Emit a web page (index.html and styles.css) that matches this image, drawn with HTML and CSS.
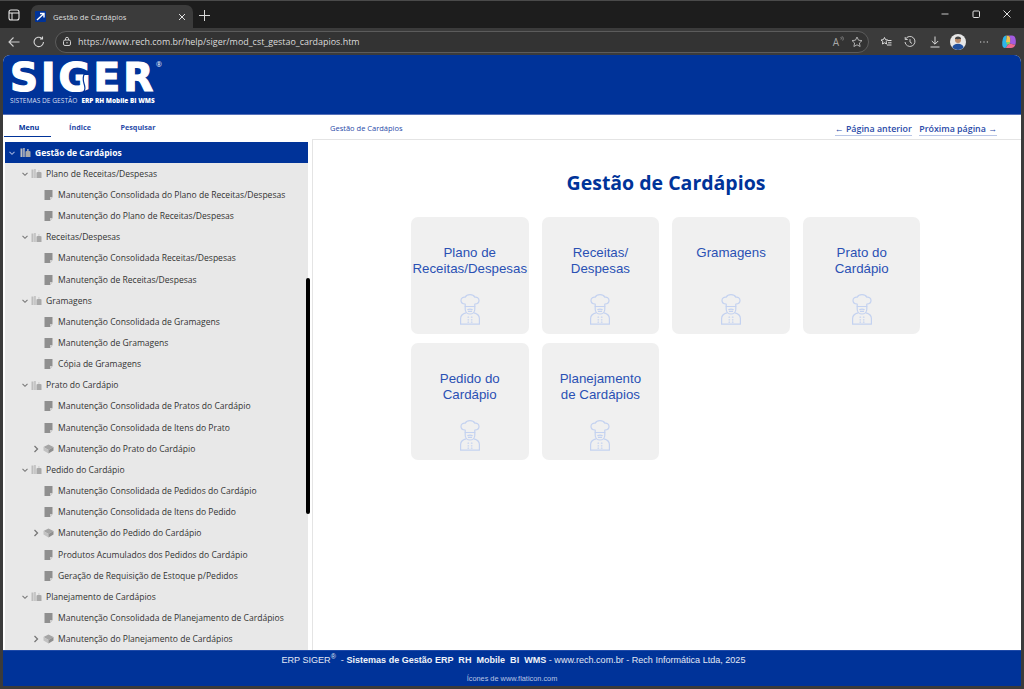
FILE: index.html
```html
<!DOCTYPE html>
<html lang="pt-BR">
<head>
<meta charset="utf-8">
<title>Gestão de Cardápios</title>
<link rel="stylesheet" href="styles.css">
</head>
<body>
<svg class="defs" width="0" height="0" aria-hidden="true">
  <symbol id="chevd" viewBox="0 0 8 8"><path d="M1.500 2.800 4 5.300 6.500 2.800" fill="none" stroke="currentColor" stroke-width="1.100"/></symbol>
  <symbol id="chevr" viewBox="0 0 8 8"><path d="M2.500 1 5.500 4 2.500 7" fill="none" stroke="currentColor" stroke-width="1.300"/></symbol>
  <symbol id="books" viewBox="0 0 11 11"><path d="M0.500 1.500h2v8.500h-2zM3.200 1h1.500v9H3.200z" fill="#bdbdbd"/><path d="M5.500 10V4.500c1.500-.6 3.500-.6 5 0V10z" fill="#a8a8a8"/><path d="M7.300 2h1.200v2H7.300z" fill="#cfcfcf"/></symbol>
  <symbol id="doc" viewBox="0 0 8 10"><path d="M0 0h8v7L5.500 10H0z" fill="#8f8f8f"/><path d="M5.500 10V7H8z" fill="#cfcfcf"/></symbol>
  <symbol id="book" viewBox="0 0 11 10"><path d="M5.500.5 10.500 3 5.500 6 .5 3z" fill="#a5a5a5"/><path d="M.5 3v3.500L5.500 9.500V6z" fill="#c2c2c2"/><path d="M10.500 3v3.500L5.500 9.500V6z" fill="#8f8f8f"/></symbol>
  <symbol id="chef" viewBox="0 0 20 31">
    <g fill="none" stroke="currentColor" stroke-width="1.200" stroke-linejoin="round" stroke-linecap="round">
      <path d="M5.200 10C2 9.800.9 8 1 6.200 1.100 4 3.200 2.800 5.200 3.200 6 1.600 7.900.7 10 .7s4 .9 4.800 2.500c2-.4 4.100.8 4.200 3 .1 1.800-1 3.600-4.200 3.800V12.500H5.200z"/>
      <path d="M5.200 12.500v2.700c0 2.700 2.100 4.800 4.800 4.800s4.800-2.100 4.800-4.800v-2.700"/>
      <path d="M7.800 15.600c1.400-.7 3-.7 4.400 0M8.500 17.400h3"/>
      <path d="M6 18.800C3 19.600.6 21.400.6 24.500v5.700h18.800v-5.700c0-3.100-2.400-4.900-5.400-5.700"/>
      <path d="M8 23.200h.6M11.400 23.200h.6M8 25.800h.6M11.400 25.800h.6M8 28.200h.6M11.400 28.200h.6"/>
    </g>
  </symbol>
</svg>

<div class="window">
  <div class="tabbar">
    <svg class="tabs-ico" viewBox="0 0 12 12" width="12" height="12"><rect x="1" y="1" width="10" height="10" rx="2" fill="none" stroke="#e8e8e8" stroke-width="1.100"/><path d="M1 4h10M4 4v7" stroke="#e8e8e8" fill="none"/></svg>
    <div class="tab">
      <svg class="favicon" viewBox="0 0 11 11" width="11" height="11"><rect width="11" height="11" rx="1" fill="#003399"/><path d="M2 9 8.500 3M5 2.500h4v4" stroke="#fff" stroke-width="1.400" fill="none"/></svg>
      <span class="tab-title">Gestão de Cardápios</span>
      <svg class="tab-x" viewBox="0 0 8 8" width="8" height="8"><path d="M1 1 7 7M7 1 1 7" stroke="#e0e0e0" stroke-width="1"/></svg>
    </div>
    <svg class="newtab" viewBox="0 0 11 11" width="11" height="11"><path d="M5.500 0v11M0 5.500h11" stroke="#d8d8d8" stroke-width="1"/></svg>
    <div class="winctl">
      <svg viewBox="0 0 10 10" width="10" height="10"><path d="M1.500 5h7" stroke="#c8c8c8" stroke-width="1"/></svg>
      <svg viewBox="0 0 10 10" width="10" height="10"><rect x="2" y="2" width="6.500" height="6.500" rx="1" fill="none" stroke="#e0e0e0" stroke-width="1"/></svg>
      <svg viewBox="0 0 10 10" width="10" height="10"><path d="M1.500 1.500 8.500 8.500M8.500 1.500 1.500 8.500" stroke="#e0e0e0" stroke-width="1"/></svg>
    </div>
  </div>

  <div class="toolbar">
    <svg class="nav-back" viewBox="0 0 12 12" width="12" height="12"><path d="M11.500 6H1M5.500 1.500 1 6l4.500 4.500" fill="none" stroke="#cfcfcf" stroke-width="1.100"/></svg>
    <svg class="nav-reload" viewBox="0 0 12 12" width="12" height="12"><path d="M10.500 6A4.700 4.700 0 1 1 8.800 2.300M9.500.5V3H7" fill="none" stroke="#d6d6d6" stroke-width="1.100"/></svg>
    <div class="urlbar">
      <svg viewBox="0 0 10 11" width="10" height="11"><rect x="1.500" y="4" width="7" height="5.500" rx="1.500" fill="none" stroke="#cfcfcf" stroke-width="1"/><path d="M3.500 4V2.800a1.500 1.500 0 0 1 3 0V4" fill="none" stroke="#cfcfcf"/><circle cx="5" cy="6.700" r=".7" fill="#cfcfcf"/></svg>
      <span class="url">https://www.rech.com.br/help/siger/mod_cst_gestao_cardapios.htm</span>
      <span class="read-aloud">A</span>
      <svg class="read-waves" viewBox="0 0 4 6" width="4" height="6"><path d="M.5 1c1 .7 1 1.800.5 2.500M2 .3c1.500 1 1.500 3 .7 4.200" fill="none" stroke="#a8a8a8" stroke-width=".7"/></svg>
      <svg viewBox="0 0 12 12" width="12" height="12"><path d="M6 1l1.500 3.200 3.500.4-2.600 2.400.7 3.500L6 8.800 2.900 10.500l.7-3.500L1 4.600l3.500-.4z" fill="none" stroke="#b0b0b0"/></svg>
    </div>
    <div class="tools">
      <svg viewBox="0 0 12 12" width="12" height="12"><path d="M4.500 1.500l1 2.200 2.300.3-1.700 1.600.5 2.400-2.100-1.200-2.100 1.200.5-2.400L1 4l2.300-.3zM8 4.500h3.500M8 6.800h3.500M7 9h4.500" fill="none" stroke="#dcdcdc"/></svg>
      <svg viewBox="0 0 12 12" width="12" height="12"><path d="M1.500 3.200A5 5 0 1 1 1 6M1.200 1v2.500h2.500M6 3.200V6l2 1.500" fill="none" stroke="#cfcfcf"/></svg>
      <svg viewBox="0 0 12 12" width="12" height="12"><path d="M6 .5v7.500M2.800 5 6 8.200 9.200 5M1.500 11h9" fill="none" stroke="#dcdcdc"/></svg>
      <svg class="avatar" viewBox="0 0 16 16" width="16" height="16"><circle cx="8" cy="8" r="8" fill="#e6e6e6"/><circle cx="8" cy="6" r="3" fill="#b98a6a"/><path d="M8 2.500c-2 0-3 1.200-3 2.500 2 .3 4 .1 6 0 0-1.300-1-2.500-3-2.500z" fill="#444"/><path d="M2.300 13.500C3 11 5 9.800 8 9.800s5 1.200 5.700 3.700A8 8 0 0 1 8 16a8 8 0 0 1-5.700-2.500z" fill="#1f4e9c"/></svg>
      <svg class="dots" viewBox="0 0 12 12" width="12" height="12"><path d="M2 6h1.200M5.400 6h1.200M8.800 6H10" stroke="#dcdcdc" stroke-width="1.200"/></svg>
      <svg class="copilot" viewBox="0 0 16 16" width="16" height="16">
        <path d="M5.500 1.500h5.500c1.800 0 3 1.200 3.500 3.200.5 2 .5 4.500-.2 6.300L9 9.500l.2-5C9.200 2.800 7.500 1.500 5.500 1.500z" fill="#a35be0"/>
        <path d="M5.500 1.500c2 0 3.700 1.300 3.700 3L9 9.500 5 8z" fill="#f2c14e"/>
        <path d="M5.500 1.500C3.500 1.500 2.300 3 1.800 5 1.300 7 1 9 1.300 11c.2 1.600 1 3 2.500 3 1.500 0 2.300-1.500 2.700-3L7 8 5 8z" fill="#2fb4e9"/>
        <path d="M3.800 14H10c2 0 3.500-1.300 4.300-3L9 9.500 6.500 11c-.4 1.500-1.200 3-2.700 3z" fill="#ee6a8f"/>
        <path d="M5 8h4L9 9.500 6.500 11z" fill="#7fd36b"/>
      </svg>
    </div>
  </div>

  <div class="page">
    <header class="brand">
      <div class="logo">
        <div class="logo-word">SIGER</div>
        <span class="logo-reg">®</span>
        <svg class="logo-swoosh" viewBox="0 0 30 26" width="30" height="26"><path d="M1 22c7 3 13 3 18 .5 3-2 2-6 1-9-1-3-1-6 0-9l5 0" fill="none" stroke="#003399" stroke-width="1.200"/></svg>
        <div class="logo-sub"><span>SISTEMAS DE GESTÃO</span><b>ERP RH Mobile BI WMS</b></div>
      </div>
    </header>

    <div class="main">
      <aside class="side">
        <nav class="side-tabs">
          <a class="side-tab is-active">Menu</a>
          <a class="side-tab">Índice</a>
          <a class="side-tab">Pesquisar</a>
        </nav>
        <div class="tree">
          <div class="row l0 is-selected"><svg class="chev"><use href="#chevd"/></svg><svg class="ico"><use href="#books"/></svg><span>Gestão de Cardápios</span></div>

          <div class="row l1"><svg class="chev"><use href="#chevd"/></svg><svg class="ico"><use href="#books"/></svg><span>Plano de Receitas/Despesas</span></div>
          <div class="row l2"><svg class="chev"></svg><svg class="ico"><use href="#doc"/></svg><span>Manutenção Consolidada do Plano de Receitas/Despesas</span></div>
          <div class="row l2"><svg class="chev"></svg><svg class="ico"><use href="#doc"/></svg><span>Manutenção do Plano de Receitas/Despesas</span></div>

          <div class="row l1"><svg class="chev"><use href="#chevd"/></svg><svg class="ico"><use href="#books"/></svg><span>Receitas/Despesas</span></div>
          <div class="row l2"><svg class="chev"></svg><svg class="ico"><use href="#doc"/></svg><span>Manutenção Consolidada Receitas/Despesas</span></div>
          <div class="row l2"><svg class="chev"></svg><svg class="ico"><use href="#doc"/></svg><span>Manutenção de Receitas/Despesas</span></div>

          <div class="row l1"><svg class="chev"><use href="#chevd"/></svg><svg class="ico"><use href="#books"/></svg><span>Gramagens</span></div>
          <div class="row l2"><svg class="chev"></svg><svg class="ico"><use href="#doc"/></svg><span>Manutenção Consolidada de Gramagens</span></div>
          <div class="row l2"><svg class="chev"></svg><svg class="ico"><use href="#doc"/></svg><span>Manutenção de Gramagens</span></div>
          <div class="row l2"><svg class="chev"></svg><svg class="ico"><use href="#doc"/></svg><span>Cópia de Gramagens</span></div>

          <div class="row l1"><svg class="chev"><use href="#chevd"/></svg><svg class="ico"><use href="#books"/></svg><span>Prato do Cardápio</span></div>
          <div class="row l2"><svg class="chev"></svg><svg class="ico"><use href="#doc"/></svg><span>Manutenção Consolidada de Pratos do Cardápio</span></div>
          <div class="row l2"><svg class="chev"></svg><svg class="ico"><use href="#doc"/></svg><span>Manutenção Consolidada de Itens do Prato</span></div>
          <div class="row l2 has-book"><svg class="chev"><use href="#chevr"/></svg><svg class="ico"><use href="#book"/></svg><span>Manutenção do Prato do Cardápio</span></div>

          <div class="row l1"><svg class="chev"><use href="#chevd"/></svg><svg class="ico"><use href="#books"/></svg><span>Pedido do Cardápio</span></div>
          <div class="row l2"><svg class="chev"></svg><svg class="ico"><use href="#doc"/></svg><span>Manutenção Consolidada de Pedidos do Cardápio</span></div>
          <div class="row l2"><svg class="chev"></svg><svg class="ico"><use href="#doc"/></svg><span>Manutenção Consolidada de Itens do Pedido</span></div>
          <div class="row l2 has-book"><svg class="chev"><use href="#chevr"/></svg><svg class="ico"><use href="#book"/></svg><span>Manutenção do Pedido do Cardápio</span></div>
          <div class="row l2"><svg class="chev"></svg><svg class="ico"><use href="#doc"/></svg><span>Produtos Acumulados dos Pedidos do Cardápio</span></div>
          <div class="row l2"><svg class="chev"></svg><svg class="ico"><use href="#doc"/></svg><span>Geração de Requisição de Estoque p/Pedidos</span></div>

          <div class="row l1"><svg class="chev"><use href="#chevd"/></svg><svg class="ico"><use href="#books"/></svg><span>Planejamento de Cardápios</span></div>
          <div class="row l2"><svg class="chev"></svg><svg class="ico"><use href="#doc"/></svg><span>Manutenção Consolidada de Planejamento de Cardápios</span></div>
          <div class="row l2 has-book"><svg class="chev"><use href="#chevr"/></svg><svg class="ico"><use href="#book"/></svg><span>Manutenção do Planejamento de Cardápios</span></div>
        </div>
        <div class="scroll-thumb"></div>
      </aside>

      <section class="content">
        <div class="crumbbar">
          <span class="crumb">Gestão de Cardápios</span>
          <div class="pager">
            <a>← Página anterior</a>
            <a>Próxima página →</a>
          </div>
        </div>
        <div class="body">
          <h1 class="title">Gestão de Cardápios</h1>
          <div class="cards">
            <a class="card"><span class="card-text">Plano de<br>Receitas/Despesas</span><svg class="card-ico"><use href="#chef"/></svg></a>
            <a class="card"><span class="card-text">Receitas/<br>Despesas</span><svg class="card-ico"><use href="#chef"/></svg></a>
            <a class="card"><span class="card-text">Gramagens</span><svg class="card-ico"><use href="#chef"/></svg></a>
            <a class="card"><span class="card-text">Prato do<br>Cardápio</span><svg class="card-ico"><use href="#chef"/></svg></a>
            <a class="card"><span class="card-text">Pedido do<br>Cardápio</span><svg class="card-ico"><use href="#chef"/></svg></a>
            <a class="card"><span class="card-text">Planejamento<br>de Cardápios</span><svg class="card-ico"><use href="#chef"/></svg></a>
          </div>
        </div>
      </section>
    </div>

    <footer class="foot">
      <p class="foot-main">ERP SIGER<sup>®</sup> &nbsp;- <b>Sistemas de Gestão ERP &nbsp;RH &nbsp;Mobile &nbsp;BI &nbsp;WMS</b> - www.rech.com.br - Rech Informática Ltda, 2025</p>
      <p class="foot-sub">Ícones de www.flaticon.com</p>
    </footer>
  </div>
</div>
</body>
</html>
```
FILE: styles.css
```css
* { box-sizing: border-box; }
html, body { margin: 0; height: 100%; overflow: hidden; }
body { background: #2a2a2a; font-family: "Open Sans", "Liberation Sans", sans-serif; }
.defs { position: absolute; }

.window { width: 1024px; height: 689px; display: flex; flex-direction: column; background: #3b3b3b; }

.tabbar { height: 28px; flex: none; display: flex; align-items: flex-end; background: #1d1d1d; border-top: 1px solid #4a4a4a; padding-left: 8px; }
.tabs-ico { align-self: center; margin-top: 1px; }
.tab { width: 162px; height: 23px; margin-left: 11px; display: flex; align-items: center; background: #3b3b3b; border-radius: 7px 7px 0 0; padding: 0 7px 0 4px; }
.tab-title { flex: 1; margin-left: 7px; font-size: 7.600px; color: #dedede; white-space: nowrap; }
.newtab { align-self: center; margin-left: 6px; margin-top: 2px; }
.winctl { margin-left: auto; align-self: center; display: flex; gap: 21px; padding-right: 12px; margin-bottom: 1px; }

.toolbar { height: 27px; flex: none; display: flex; align-items: center; background: #3b3b3b; padding-left: 8px; }
.nav-reload { margin-left: 13px; }
.urlbar { width: 814px; height: 22px; margin-left: 10px; display: flex; align-items: center; border: 1px solid #5c5c5c; border-radius: 11px; background: #333; padding: 0 5px 0 6px; }
.url { flex: 1; margin-left: 6px; font-size: 8.930px; color: #dcdcdc; white-space: nowrap; }
.read-aloud { font-size: 10px; color: #a8a8a8; line-height: 1; }
.read-waves { margin: 0 7px 5px 1px; }
.tools { display: flex; align-items: center; gap: 12.400px; margin-left: 11px; }
.avatar { margin-left: -3.400px; }
.dots { margin-left: -0.400px; }
.copilot { margin-left: -1.400px; }

.page { flex: 1; min-height: 0; margin: 0 3px 3px; display: flex; flex-direction: column; background: #fff; border-radius: 7px 7px 0 0; overflow: hidden; }

.brand { height: 60px; flex: none; background: #003399; border-bottom: 1px solid #5570b8; padding: 8px 0 0 7px; }
.logo { position: relative; width: 152px; color: #fff; }
.logo-word { font-family: "DejaVu Sans", sans-serif; font-weight: 700; font-size: 39px; line-height: 30px; letter-spacing: 3px; -webkit-text-stroke: 1.200px #fff; white-space: nowrap; height: 30px; }
.logo-reg { position: absolute; left: 146px; top: -2px; font-size: 7px; line-height: 8px; }
.logo-swoosh { position: absolute; left: 54px; top: 7px; }
.logo-sub { margin-top: 3px; font-size: 6.650px; line-height: 9px; white-space: nowrap; color: #d5ddf0; }
.logo-sub b { color: #fff; font-weight: 800; font-size: 6.400px; margin-left: 4px; }

.main { flex: 1; min-height: 0; display: flex; }

.side { position: relative; width: 309px; flex: none; display: flex; flex-direction: column; }
.side-tabs { height: 22px; flex: none; display: flex; margin-left: 1px; }
.side-tab { width: 47px; padding-top: 7px; text-align: center; font-size: 7.200px; font-weight: 700; color: #2a4aa8; white-space: nowrap; }
.side-tab:nth-child(2) { margin-left: 4px; width: 50px; }
.side-tab:nth-child(3) { margin-left: 4px; width: 58px; }
.side-tab.is-active { color: #003399; border-bottom: 1px solid #003399; padding-left: 3px; }
.tree { flex: 1; min-height: 0; margin: 5px 4px 0 2px; overflow: hidden; background: #e8e8e8; }
.row { height: 21.160px; display: flex; align-items: center; font-size: 8.560px; color: #333; white-space: nowrap; }
.chev { width: 8px; height: 8px; flex: none; color: #777; }
.ico { width: 11px; height: 11px; flex: none; margin-left: 2px; margin-right: 4px; }
.l0 { padding-left: 3px; font-size: 8.500px; font-weight: 700; }
.l0 .ico { margin-left: 4px; margin-right: 4px; }
.l1 { padding-left: 16px; }
.l2 { padding-left: 27px; }
.l2 .ico { margin-left: 4px; margin-right: 5px; width: 9px; height: 10px; }
.has-book .ico { margin-left: 3px; margin-right: 4px; width: 11px; }
.is-selected { background: #003399; color: #fff; }
.is-selected .chev { color: #9fb0dd; }
.scroll-thumb { position: absolute; left: 303px; top: 163px; width: 4px; height: 236px; border-radius: 2px; background: #000; }

.content { flex: 1; min-width: 0; display: flex; flex-direction: column; }
.crumbbar { height: 25px; flex: none; display: flex; align-items: flex-start; justify-content: space-between; border-bottom: 1px solid #e4e4e4; padding: 8px 24px 0 18px; }
.crumb { font-size: 7.500px; color: #2a4aa8; line-height: 11px; }
.pager { display: flex; gap: 7.500px; }
.pager a { font-size: 8.850px; font-weight: 600; color: #2a4aa8; line-height: 12px; border-bottom: 1px solid #b9c6e6; white-space: nowrap; }
.body { flex: 1; min-height: 0; border-left: 1px solid #e4e4e4; display: flex; flex-direction: column; align-items: center; padding: 29px 2px 0 0; }
.title { margin: 0; font-size: 19.500px; line-height: 28px; font-weight: 700; color: #003399; }
.cards { margin-top: 20px; width: 510px; display: grid; grid-template-columns: repeat(4, 117.500px); grid-auto-rows: 117px; column-gap: 13.170px; row-gap: 9px; }
.card { display: flex; flex-direction: column; align-items: center; background: #f0f0f0; border-radius: 7px; padding: 28px 0 9px; }
.card-text { flex: 1; text-align: center; font-family: "Liberation Sans", Arial, sans-serif; font-size: 13.300px; line-height: 16px; color: #2a50b4; }
.card-ico { width: 20px; height: 31px; flex: none; color: #c4d2f0; }

.foot { height: 36px; flex: none; background: #003399; border-top: 1px solid #1f4aa8; text-align: center; font-family: "Liberation Sans", Arial, sans-serif; }
.foot p { margin: 0; white-space: nowrap; }
.foot-main { padding: 4px 0 0 3px; font-size: 9.050px; line-height: 11px; color: #e2e8f5; }
.foot-main sup { font-size: 7px; line-height: 0; }
.foot-main b { color: #f0f3fa; }
.foot .foot-sub { margin-top: 8px; font-size: 7.350px; line-height: 9px; color: #b9c6e4; }
```
